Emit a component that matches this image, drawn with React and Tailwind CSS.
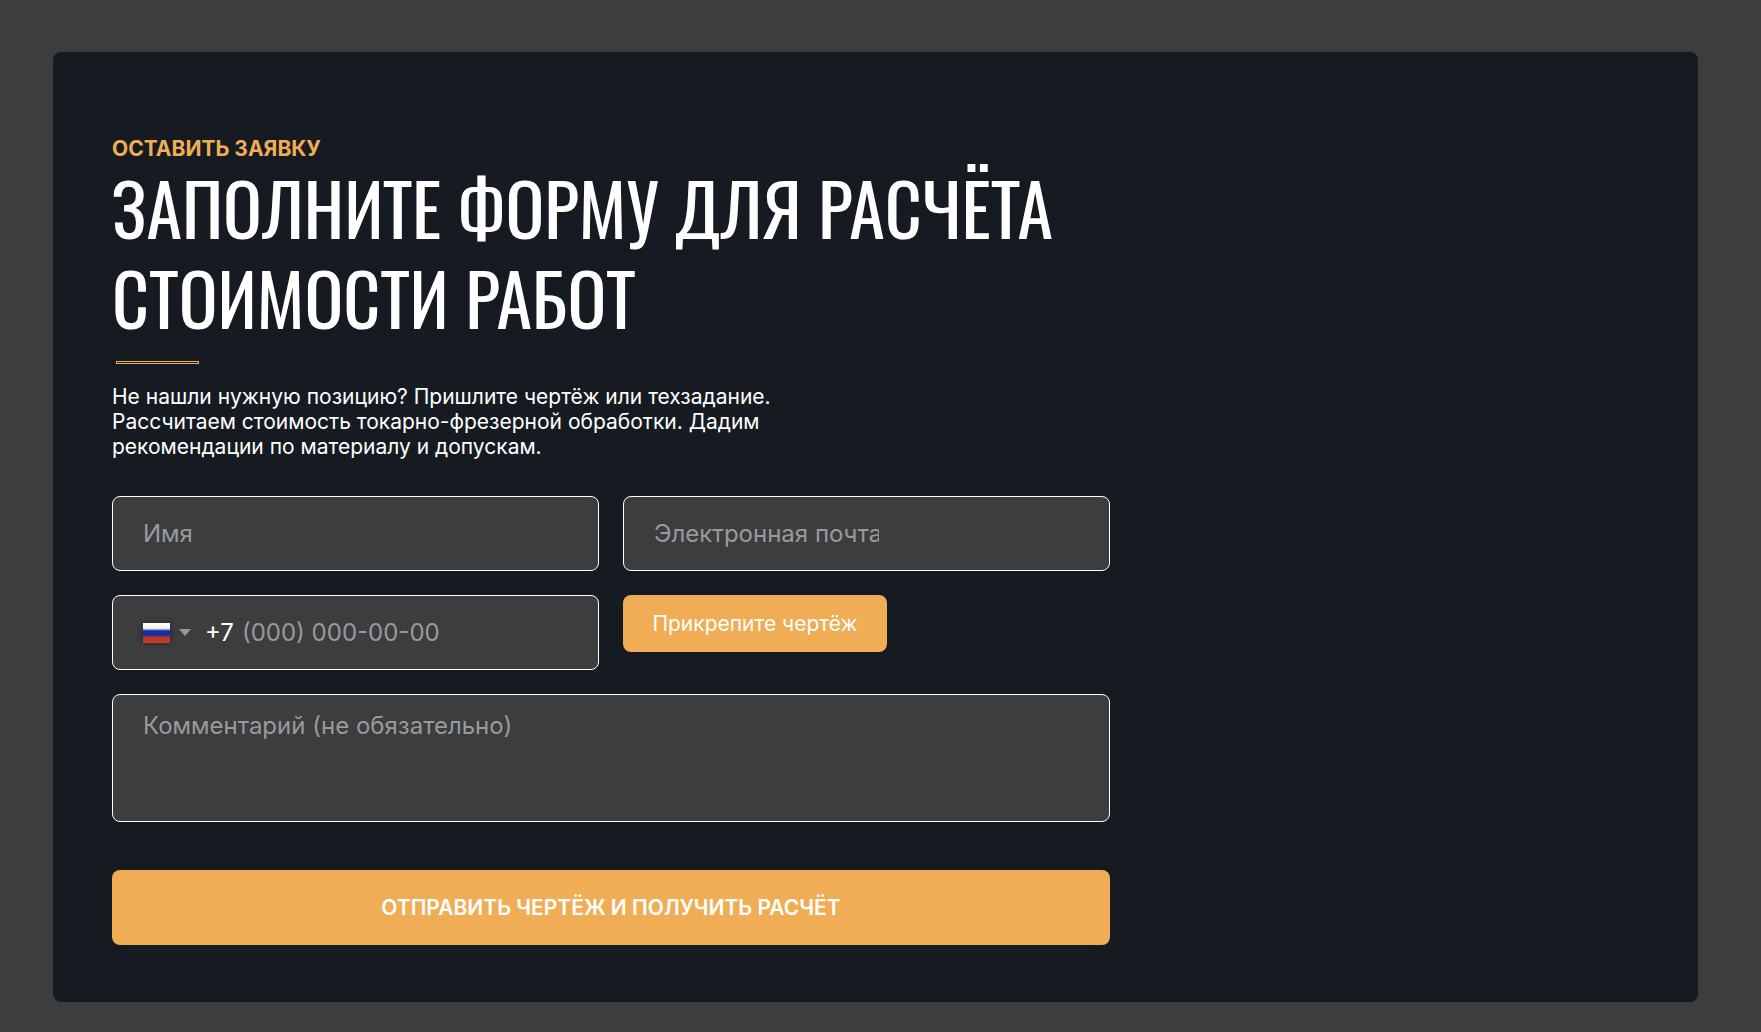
import { useState } from 'react'

const fieldBox = 'flex h-[75px] items-center rounded-lg border border-white bg-[#3c3d3f] px-[30px]'
const fieldText = 'bg-transparent text-2xl text-white outline-none placeholder:text-[#9a9a9b]'

function FlagRu() {
  return (
    <svg viewBox="0 0 27 20" className="h-5 w-[27px] shadow-[0_0_6px_rgba(0,0,0,0.4)]" aria-hidden="true">
      <defs>
        <linearGradient id="flag-ru" x1="0" y1="0" x2="0" y2="1">
          <stop offset="0" stopColor="#fff" />
          <stop offset="0.27" stopColor="#f0f0f2" />
          <stop offset="0.38" stopColor="#2a4cae" />
          <stop offset="0.42" stopColor="#152fa0" />
          <stop offset="0.6" stopColor="#152fa0" />
          <stop offset="0.72" stopColor="#b83628" />
          <stop offset="1" stopColor="#c93c2b" />
        </linearGradient>
      </defs>
      <rect width="27" height="20" fill="url(#flag-ru)" />
    </svg>
  )
}

export default function App() {
  const [form, setForm] = useState({ name: '', email: '', phone: '', comment: '' })

  const update = e => setForm({ ...form, [e.target.name]: e.target.value })

  return (
    <main className="min-h-screen bg-[#3c3d3f] pt-[52px] pr-[63px] pb-[30px] pl-[53px] font-['Inter',sans-serif]">
      <section className="rounded-lg bg-[#161b22] px-[59px] pt-[84px] pb-[57px]">
        <p className="text-[21px] leading-[26px] font-bold text-[#f0ad55]">ОСТАВИТЬ ЗАЯВКУ</p>
        <h1 className="font-['Oswald',sans-serif] text-[72px] leading-[90px] text-white">
          ЗАПОЛНИТЕ ФОРМУ ДЛЯ РАСЧЁТА
          <br />
          СТОИМОСТИ РАБОТ
        </h1>
        <div className="mt-[19px] ml-1 h-[3px] w-[83px] border border-[#f0ad55]" />
        <p className="mt-5 max-w-[680px] text-[21px] leading-[25px] text-white">
          Не нашли нужную позицию? Пришлите чертёж или техзадание. Рассчитаем стоимость
          токарно-фрезерной обработки. Дадим рекомендации по материалу и допускам.
        </p>

        <form className="mt-[37px] grid max-w-[998px] grid-cols-2 gap-6" onSubmit={e => e.preventDefault()}>
          <div className={fieldBox}>
            <input
              name="name"
              aria-label="Имя"
              placeholder="Имя"
              value={form.name}
              onChange={update}
              className={`${fieldText} w-full`}
            />
          </div>
          <div className={fieldBox}>
            <input
              type="email"
              name="email"
              aria-label="Электронная почта"
              placeholder="Электронная почта"
              value={form.email}
              onChange={update}
              className={`${fieldText} w-[225px]`}
            />
          </div>
          <div className={fieldBox}>
            <button type="button" aria-label="Код страны" className="flex items-center gap-[9px]">
              <FlagRu />
              <svg viewBox="0 0 12 7" className="h-[7px] w-3" aria-hidden="true">
                <path d="M0 0h12L6 7z" fill="#9a9a9b" />
              </svg>
            </button>
            <span className="ml-[14px] text-2xl text-white">+7</span>
            <input
              type="tel"
              name="phone"
              aria-label="Телефон"
              placeholder="(000) 000-00-00"
              value={form.phone}
              onChange={update}
              className={`${fieldText} ml-2 w-full min-w-0`}
            />
          </div>
          <div>
            <button
              type="button"
              className="h-[57px] w-[264px] rounded-lg bg-[#f0ad55] text-[21px] text-white"
            >
              Прикрепите чертёж
            </button>
          </div>
          <textarea
            name="comment"
            aria-label="Комментарий"
            placeholder="Комментарий (не обязательно)"
            value={form.comment}
            onChange={update}
            className="col-span-2 h-32 resize-none rounded-lg border border-white bg-[#3c3d3f] px-[30px] py-[15px] text-2xl text-white outline-none placeholder:text-[#9a9a9b]"
          />
          <button
            type="submit"
            className="col-span-2 mt-6 h-[75px] rounded-lg bg-[#f0ad55] text-[21px] font-semibold text-white"
          >
            ОТПРАВИТЬ ЧЕРТЁЖ И ПОЛУЧИТЬ РАСЧЁТ
          </button>
        </form>
      </section>
    </main>
  )
}
